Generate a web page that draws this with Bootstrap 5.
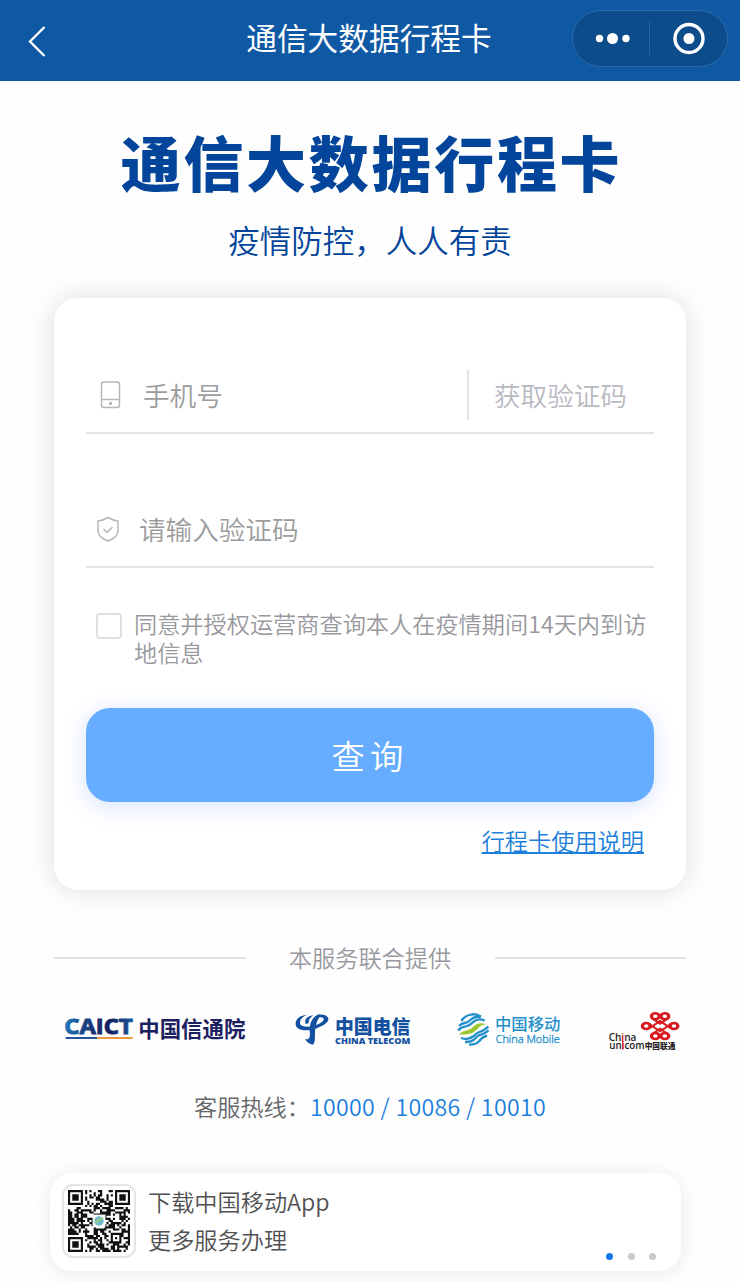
<!DOCTYPE html>
<html lang="zh-CN">
<head>
<meta charset="utf-8">
<meta name="viewport" content="width=device-width, initial-scale=1">
<title>通信大数据行程卡</title>
<link rel="stylesheet" href="https://cdn.jsdelivr.net/npm/bootstrap@5.3.0/dist/css/bootstrap.min.css">
<style>
body{font-family:"Noto Sans CJK SC",sans-serif;font-weight:350;font-size:23.2px;line-height:1.2;color:#505052;background:#fefefe;height:1282px;overflow:hidden}
.topbar{height:81px;background:#0f59a4;color:#fff}
.topbar .back{width:120px;padding-left:27px}
.topbar h1{font-size:30.7px;font-weight:400;line-height:40px;margin-top:-7px;padding-left:46px}
.capsule{width:156px;height:57px;border-radius:29px;background:#0d4c8a;border:1px solid #2b69a8;margin:-5px 12px 0 0}
.brand{height:217px;color:#03459b;padding-top:44px}
.brand h2{font-size:60px;font-weight:900;letter-spacing:2.7px;line-height:72px;padding-left:3px}
.brand p{font-size:31.5px;line-height:40px;margin-top:22px}
.panel{margin:0 54px;height:592px;border-radius:24px;background:#fff;box-shadow:0 0 28px rgba(0,0,0,.13);padding:61px 32px 0}
.field{height:75px;border-bottom:2px solid #e3e3e4;font-size:26.6px;color:#9c9c9c;padding-bottom:2px}
.field .code{border-left:2px solid #e3e3e4;height:50px;width:187px;padding-left:25px;color:#b9b9c2}
.agree{color:#98989e;line-height:28.6px;height:99px}
.tick{width:26px;height:26px;border:2px solid #dfdfe2;border-radius:4px;margin:4px 12px 0 10px}
.query{height:94px;border-radius:24px;background:#66adff;color:#fff;font-size:33.4px;letter-spacing:5px;font-weight:350;box-shadow:0 4px 22px rgba(80,130,255,.24)}
.query:hover{background:#66adff;color:#fff}
.guide{color:#1c7fdb;text-decoration:underline;text-decoration-thickness:2px;text-underline-offset:2px}
.joint{margin:54px 54px 0;height:28px;color:#98989e}
.joint i{width:191.5px;height:2px;background:#e3e3e5}
.logos{padding-left:50px;height:60px;margin-top:28px}
.hot{margin-top:33px;height:28px;color:#666668}
.hot span{color:#1c7fdf;letter-spacing:.3px}
.banner{margin:52px 59px 0 50px;height:98px;border-radius:22px;background:#fff;box-shadow:0 2px 20px rgba(0,0,0,.09);padding:11px 12px 12px}
.qr{width:74px;height:74px;border:2px solid #e4e4e5;border-radius:11px}
.dots{gap:14.5px;margin:0 13px -1px auto}
.dots b{width:7px;height:7px;border-radius:50%;background:#c9c9cb}
.dots b:first-child{background:#1475ea}
svg{flex:none;display:block}
</style>
</head>
<body>
<header class="topbar d-flex align-items-center justify-content-between">
  <div class="back"><svg width="20" height="32" viewBox="0 0 20 32" fill="none" stroke="#fff" stroke-width="2.3"><path d="M17.500 2L3 16.500 17.500 31"/></svg></div>
  <h1 class="mb-0">通信大数据行程卡</h1>
  <div class="capsule d-flex"><svg width="154" height="55" viewBox="0 0 154 55"><g fill="#fff"><circle cx="26.500" cy="27.500" r="3.700"/><circle cx="39.500" cy="27.500" r="5.500"/><circle cx="53" cy="27.500" r="3.700"/><circle cx="116" cy="27.500" r="5.500"/></g><path d="M76.500 11v33" stroke="#2a639b"/><circle cx="116" cy="27.500" r="14" fill="none" stroke="#fff" stroke-width="3.400"/></svg></div>
</header>

<section class="brand text-center">
  <h2 class="mb-0">通信大数据行程卡</h2>
  <p class="mb-0">疫情防控，人人有责</p>
</section>

<main class="panel">
  <div class="field d-flex align-items-center">
    <svg width="57" height="30" viewBox="0 0 57 30" fill="none" stroke="#b6b6ba" stroke-width="1.500"><rect x="15.500" y="2" width="18" height="25.500" rx="2.500"/><path d="M15.500 19.500h18"/><circle cx="24.500" cy="23.500" r=".9" fill="#999"/></svg>
    <span class="flex-grow-1">手机号</span>
    <span class="code d-flex align-items-center">获取验证码</span>
  </div>
  <div class="field d-flex align-items-center" style="margin-top:59px">
    <svg width="53" height="30" viewBox="0 0 53 30" fill="none" stroke="#b6b6ba" stroke-width="1.500" stroke-linejoin="round"><path d="M22 3.500Q27 6.500 32 7V16.500Q32 23.500 22 27Q12 23.500 12 16.500V7Q17 6.500 22 3.500Z"/><path d="M17.500 15l3.500 3.500 5.500-5.500"/></svg>
    <span>请输入验证码</span>
  </div>
  <div class="agree d-flex" style="margin-top:41px">
    <span class="tick flex-shrink-0"></span>
    <span class="text-nowrap">同意并授权运营商查询本人在疫情期间14天内到访<br>地信息</span>
  </div>
  <button class="query btn border-0 w-100 d-flex align-items-center justify-content-center p-0" type="button">查询</button>
  <div class="text-end" style="padding:25px 10px 0 0"><a class="guide" href="#">行程卡使用说明</a></div>
</main>

<div class="joint d-flex align-items-center justify-content-between"><i></i><span>本服务联合提供</span><i></i></div>

<div class="logos d-flex">
  <svg width="210" height="60" viewBox="0 0 630 180">
    <defs><linearGradient id="ca" x1="0" x2="1"><stop offset="0" stop-color="#2179bd"/><stop offset=".3" stop-color="#173f82"/><stop offset=".65" stop-color="#151e5e"/><stop offset="1" stop-color="#1959a0"/></linearGradient></defs>
    <text x="43" y="102" font-family="Open Sans" font-weight="700" font-size="66" textLength="205" lengthAdjust="spacingAndGlyphs" fill="url(#ca)" stroke="url(#ca)" stroke-width="3">CAICT</text>
    <path d="M47 114h95" stroke="#24539a" stroke-width="6"/><path d="M142 114h106" stroke="#ee963f" stroke-width="6"/>
    <text x="265" y="111" font-weight="700" font-size="66" textLength="321" lengthAdjust="spacingAndGlyphs" fill="#1c2060">中国信通院</text>
  </svg>
  <svg style="margin-left:20px" width="150" height="60" viewBox="0 0 450 180">
    <g fill="#1450a0"><path d="M80 44C58 46 45 59 47 74C50 92 80 95 107 86C132 77 146 67 145 57C144 45 125 41 112 45L116 53C124 50 132 52 131 59C128 68 104 79 84 80C69 80 60 77 60 69C59 59 67 51 80 44Z"/><path d="M117 43C101 49 91 62 90 79C86 91 92 99 89 110C87 118 81 119 75 117C80 126 88 133 99 134C107 125 104 111 105 101C105 87 108 67 117 54Z"/><path d="M92 47C79 51 72 61 77 72L87 69C84 61 89 54 100 46Z"/></g>
    <text x="165" y="103" font-weight="900" font-size="58" textLength="226" lengthAdjust="spacingAndGlyphs" fill="#1450a0">中国电信</text>
    <text x="165" y="132" font-family="Open Sans" font-weight="800" font-size="25" textLength="226" lengthAdjust="spacingAndGlyphs" fill="#1450a0">CHINA TELECOM</text>
  </svg>
  <svg style="margin-left:15px" width="130" height="60" viewBox="0 0 390 180">
    <g fill="none" stroke="#2390ca" stroke-width="7"><path d="M49 63Q57 48 77 44Q94 40 108 50"/><path d="M42 78Q50 70 59 69Q69 68 80 57Q91 48 107 51"/><path d="M39 91Q50 80 63 79Q74 77 86 65Q100 53 119 62"/><path d="M130 80Q118 91 108 94Q97 96 86 108Q70 122 48 114"/><path d="M131 91Q119 101 108 104Q97 106 88 118Q78 127 60 126"/><path d="M126 107Q110 112 103 123Q92 135 72 134"/></g>
    <path d="M41 103Q55 92 67 91Q78 88 90 76Q104 65 123 73Q108 74 98 86Q86 99 72 101Q57 105 41 103Z" fill="#9ac62f"/>
    <text x="150" y="91" font-weight="500" font-size="49" textLength="196" lengthAdjust="spacingAndGlyphs" fill="#2390ca">中国移动</text>
    <text x="152" y="128" font-family="Open Sans" font-size="35" textLength="192" lengthAdjust="spacingAndGlyphs" fill="#2390ca" stroke="#2390ca" stroke-width="1.200">China Mobile</text>
  </svg>
  <svg style="margin-left:20px" width="100" height="60" viewBox="0 0 300 180">
    <g transform="translate(-40 0) scale(1.300 1)" fill="none" stroke="#d71920" stroke-width="7.500"><circle cx="170" cy="49" r="9"/><circle cx="192" cy="49" r="9"/><circle cx="149" cy="78" r="9"/><circle cx="213" cy="78" r="9"/><circle cx="170" cy="108" r="9"/><circle cx="192" cy="108" r="9"/><path d="M162 54L181 71 200 54M156 72L181 94 206 72M156 85L181 63 206 85M162 103L181 86 200 103" stroke-width="5.500"/></g>
    <g font-family="Open Sans" font-weight="600" fill="#272124"><text x="41" y="123" font-size="30" textLength="83" lengthAdjust="spacingAndGlyphs">Ch<tspan fill="#d71920">i</tspan>na</text><text x="43" y="148" font-size="30" textLength="106" lengthAdjust="spacingAndGlyphs">un<tspan fill="#d71920">i</tspan>com</text></g>
    <text x="149" y="147" font-weight="900" font-size="24" textLength="92" lengthAdjust="spacingAndGlyphs" fill="#272124">中国联通</text>
    <path d="M83 106v43" stroke="#d71920" stroke-width="3"/>
  </svg>
</div>

<div class="hot text-center">客服热线：<span>10000 / 10086 / 10010</span></div>

<footer class="banner d-flex">
  <div class="qr d-flex align-items-center justify-content-center">
    <svg width="62" height="62" viewBox="0 0 29 29"><path id="modules" fill="#111"/><rect x="11.500" y="11.500" width="6" height="6" fill="#fff"/><circle cx="14.500" cy="14.500" r="2.200" fill="#70b9c8"/><path d="M12.500 15q1.500-.3 2-1t2-.8" stroke="#a3cf88" stroke-width=".8" fill="none"/></svg>
  </div>
  <div class="text-nowrap" style="margin:-2px 0 0 12px;line-height:38px">下载中国移动App<br>更多服务办理</div>
  <div class="dots d-flex align-self-end"><b></b><b></b><b></b></div>
</footer>

<script>
// Fill the code area with modules around the three finders and the alignment mark.
(function () {
  var n = 29, seed = 2020, d = '';
  function ring(x, y, cx, cy) { return Math.max(Math.abs(x - cx), Math.abs(y - cy)); }
  for (var y = 0; y < n; y++) for (var x = 0; x < n; x++) {
    seed = (seed * 1103515245 + 12345) % 2147483648;
    var on = (seed / 2147483648) < 0.52;
    [[3, 3], [25, 3], [3, 25]].forEach(function (f) {
      var r = ring(x, y, f[0], f[1]);
      if (r <= 4) on = r === 3 || r <= 1;
    });
    var a = ring(x, y, 22, 22);
    if (a <= 2) on = a !== 1;
    if (on) d += 'M' + x + ' ' + y + 'h1v1h-1z';
  }
  document.getElementById('modules').setAttribute('d', d);
})();
</script>
<script src="https://cdn.jsdelivr.net/npm/bootstrap@5.3.0/dist/js/bootstrap.bundle.min.js"></script>
</body>
</html>
